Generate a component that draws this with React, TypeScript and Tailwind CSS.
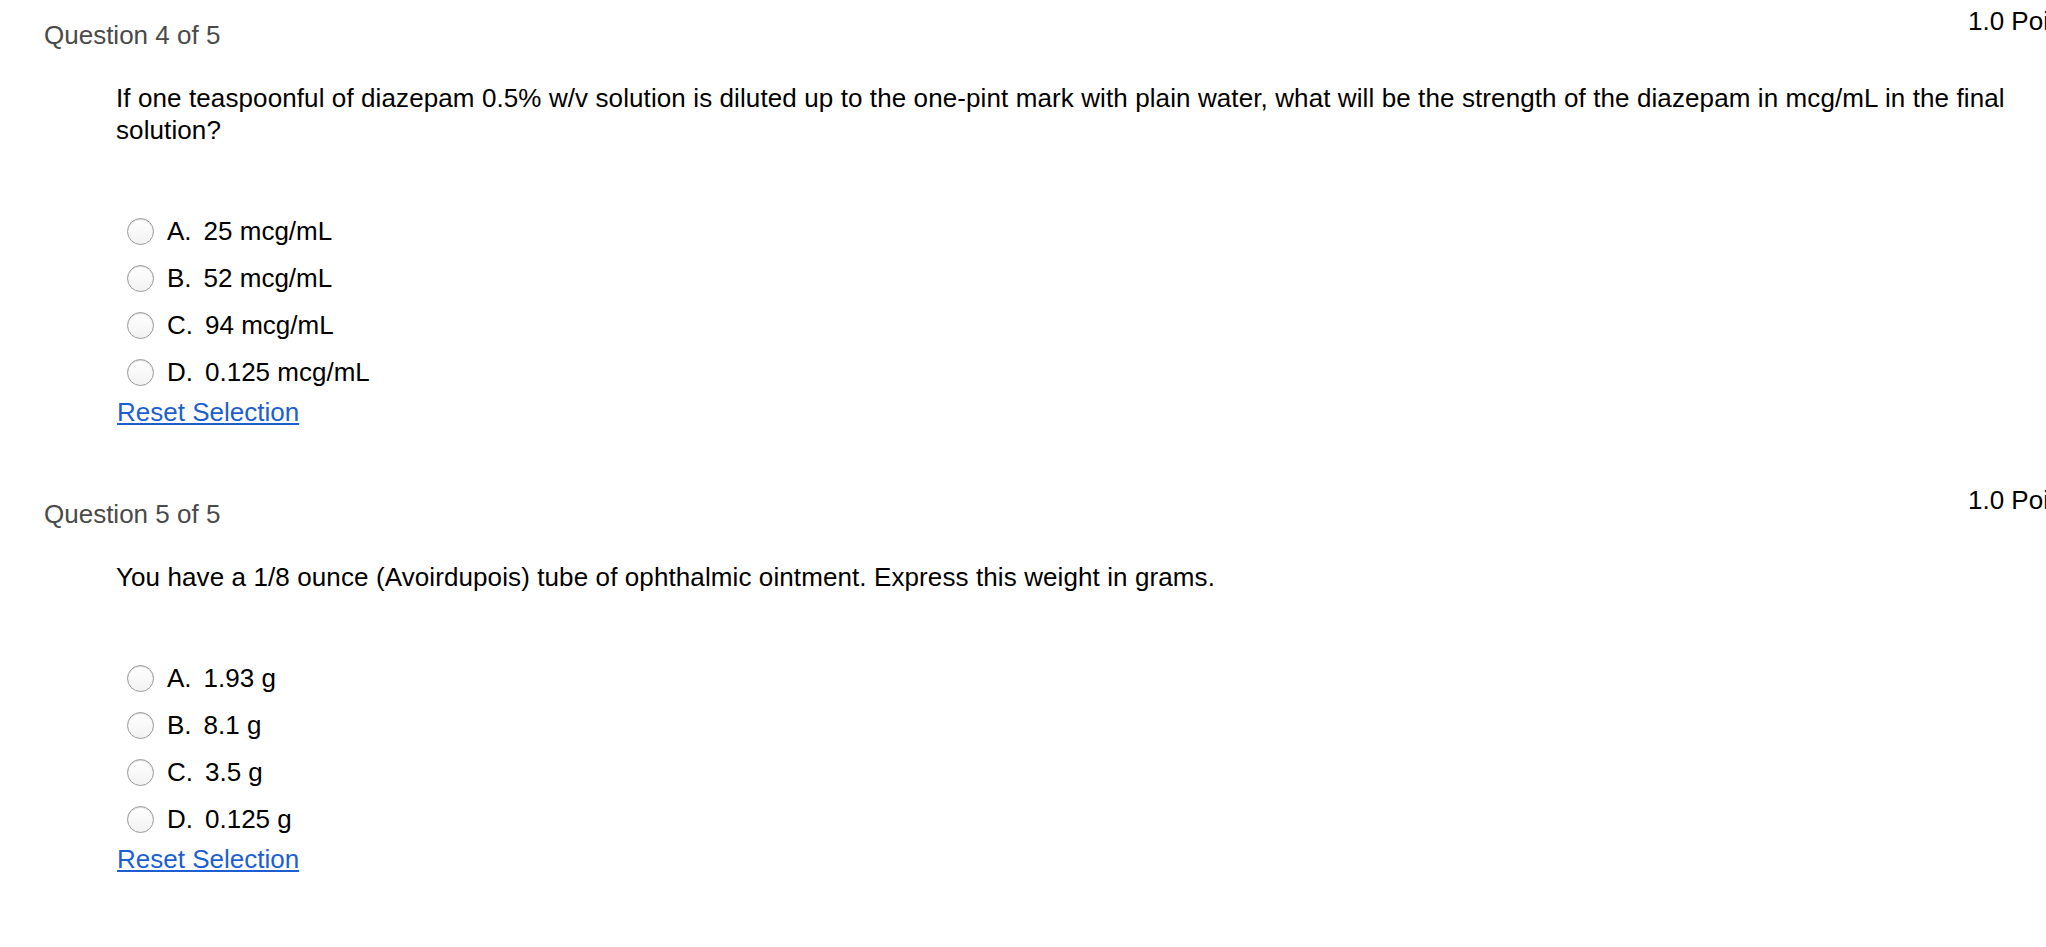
import React from "react";

interface Question {
  number: number;
  total: number;
  points: string;
  text: string;
  options: { letter: string; label: string }[];
}

const questions: Question[] = [
  {
    number: 4,
    total: 5,
    points: "1.0 Points",
    text: "If one teaspoonful of diazepam 0.5% w/v solution is diluted up to the one-pint mark with plain water, what will be the strength of the diazepam in mcg/mL in the final solution?",
    options: [
      { letter: "A.", label: "25 mcg/mL" },
      { letter: "B.", label: "52 mcg/mL" },
      { letter: "C.", label: "94 mcg/mL" },
      { letter: "D.", label: "0.125 mcg/mL" },
    ],
  },
  {
    number: 5,
    total: 5,
    points: "1.0 Points",
    text: "You have a 1/8 ounce (Avoirdupois) tube of ophthalmic ointment. Express this weight in grams.",
    options: [
      { letter: "A.", label: "1.93 g" },
      { letter: "B.", label: "8.1 g" },
      { letter: "C.", label: "3.5 g" },
      { letter: "D.", label: "0.125 g" },
    ],
  },
];

function Radio() {
  return (
    <span className="w-[27px] h-[27px] shrink-0 rounded-full border-[1.5px] border-[#9a9a9a] bg-gradient-to-b from-white to-[#f2f2f2] shadow-[inset_0_1px_1px_rgba(0,0,0,0.15)]" />
  );
}

function QuestionBlock({ q }: { q: Question }) {
  return (
    <div>
      {/* header: points sit a bit higher than the question label */}
      <div className="flex items-start">
        <div className="flex-1 mt-[14px] text-[26px] leading-[30px] text-[#4a4a4a]">
          Question {q.number} of {q.total}
        </div>
        <div className="w-[120px] shrink-0 text-[26px] leading-[30px] text-black whitespace-nowrap">
          {q.points}
        </div>
      </div>

      <div className="mt-[32px] pl-[72px] w-[2012px] text-[26px] leading-[32px] tracking-[0.1px] text-black">
        {q.text}
      </div>

      <div className="mt-[62px] pl-[83px]">
        {q.options.map((o) => (
          <label
            key={o.letter}
            className="flex items-center h-[47px] text-[26px] text-black cursor-pointer"
          >
            <Radio />
            <span className="ml-[13px]">{o.letter}</span>
            <span className="ml-[12px]">{o.label}</span>
          </label>
        ))}
      </div>

      <div className="pl-[73px] h-[32px] text-[26px] leading-[32px]">
        <a href="#" className="text-[#1d5fd1] underline underline-offset-2">
          Reset Selection
        </a>
      </div>
    </div>
  );
}

export default function App() {
  return (
    <div className="w-full min-h-screen overflow-hidden bg-white font-['Liberation_Sans',Arial,sans-serif]">
      <div className="w-[2088px] pt-[6px] pl-[44px] flex flex-col gap-[57px]">
        {questions.map((q) => (
          <QuestionBlock key={q.number} q={q} />
        ))}
      </div>
    </div>
  );
}
